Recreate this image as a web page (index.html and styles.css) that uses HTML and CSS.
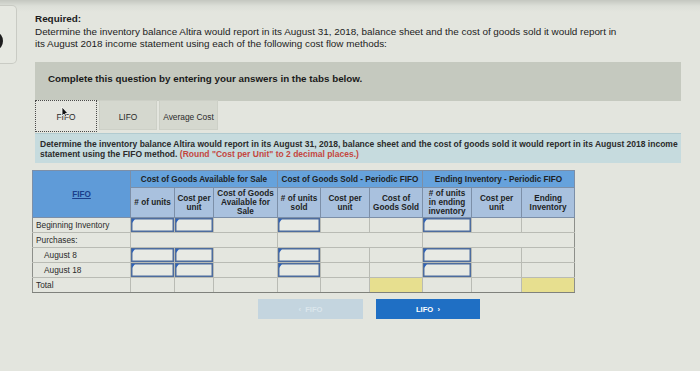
FILE: index.html
```html
<!DOCTYPE html>
<html lang="en">
<head>
    <meta charset="UTF-8">
    <title>Inventory - FIFO</title>
    <link rel="stylesheet" href="styles.css">
</head>
<body>
    <div class="page">
        <div class="side-card"><i class="ring"></i></div>
        <div class="main">
            <div class="required">
                <b>Required:</b>
                <p>Determine the inventory balance Altira would report in its August 31, 2018, balance sheet and the cost of goods sold it would report in<br>its August 2018 income statement using each of the following cost flow methods:</p>
            </div>
            <div class="notice">Complete this question by entering your answers in the tabs below.</div>

            <div class="tabs">
                <a class="tab active">FIFO</a>
                <a class="tab">LIFO</a>
                <a class="tab">Average Cost</a>
                <svg class="cursor" width="8" height="12" viewBox="0 0 8 12">
                    <path d="M1 1 L1 10 L3 8 L4.5 11 L5.8 10.4 L4.4 7.5 L7 7.5 Z" fill="#111" stroke="#fff" stroke-width="0.8"/>
                </svg>
            </div>

            <div class="info">
                <p>Determine the inventory balance Altira would report in its August 31, 2018, balance sheet and the cost of goods sold it would report in its August 2018 income</p>
                <p>statement using the FIFO method. <span class="hint">(Round "Cost per Unit" to 2 decimal places.)</span></p>
            </div>

            <table class="grid">
                <colgroup>
                    <col style="width:98px"><col style="width:44px"><col style="width:39px"><col style="width:64px">
                    <col style="width:43px"><col style="width:49px"><col style="width:53px">
                    <col style="width:49px"><col style="width:50px"><col style="width:53px">
                </colgroup>
                <thead>
                    <tr class="group">
                        <th rowspan="2" class="corner"><u>FIFO</u></th>
                        <th colspan="3">Cost of Goods Available for Sale</th>
                        <th colspan="3">Cost of Goods Sold - Periodic FIFO</th>
                        <th colspan="3">Ending Inventory - Periodic FIFO</th>
                    </tr>
                    <tr class="sub">
                        <th># of units</th>
                        <th>Cost per<br>unit</th>
                        <th>Cost of Goods<br>Available for<br>Sale</th>
                        <th># of units<br>sold</th>
                        <th>Cost per<br>unit</th>
                        <th>Cost of<br>Goods Sold</th>
                        <th># of units<br>in ending<br>inventory</th>
                        <th>Cost per<br>unit</th>
                        <th>Ending<br>Inventory</th>
                    </tr>
                </thead>
                <tbody>
                    <tr>
                        <td class="label">Beginning Inventory</td>
                        <td class="entry"></td><td class="entry"></td><td></td>
                        <td class="entry sep"></td><td></td><td></td>
                        <td class="entry sep"></td><td></td><td></td>
                    </tr>
                    <tr>
                        <td class="label">Purchases:</td>
                        <td colspan="3"></td>
                        <td colspan="3" class="sep"></td>
                        <td colspan="3" class="sep"></td>
                    </tr>
                    <tr>
                        <td class="label indent">August 8</td>
                        <td class="entry"></td><td class="entry"></td><td></td>
                        <td class="entry sep"></td><td></td><td></td>
                        <td class="entry sep"></td><td></td><td></td>
                    </tr>
                    <tr>
                        <td class="label indent">August 18</td>
                        <td class="entry"></td><td class="entry"></td><td></td>
                        <td class="entry sep"></td><td></td><td></td>
                        <td class="entry sep"></td><td></td><td></td>
                    </tr>
                    <tr class="total">
                        <td class="label">Total</td>
                        <td></td><td></td><td></td>
                        <td class="sep"></td><td></td><td class="sum"></td>
                        <td class="sep"></td><td></td><td class="sum"></td>
                    </tr>
                </tbody>
            </table>

            <div class="nav">
                <button class="nav-btn prev" disabled>&lsaquo;&nbsp;&nbsp;FIFO</button>
                <button class="nav-btn next">LIFO&nbsp;&nbsp;&rsaquo;</button>
            </div>
        </div>
    </div>
</body>
</html>
```

FILE: styles.css
```css
body,
p{
    margin: 0;
    padding: 0;
}
body{
    width: 700px;
    height: 371px;
    overflow: hidden;
    font-family: "Liberation Sans", Arial, sans-serif;
    color: #1c1c1c;
    background: linear-gradient(to bottom, #c4c7c0 0, #dcdfd8 6px, #e3e5de 12px);
}
.page{
    display: flex;
    align-items: flex-start;
}
.side-card{
    width: 16px;
    height: 57px;
    margin-top: 5px;
    border: 1px solid #c9cbc4;
    border-left: none;
    border-radius: 0 5px 5px 0;
    background-color: #e6e8e1;
    overflow: hidden;
    position: relative;
}
/* part of a big digit peeking out of the card */
.side-card .ring{
    position: absolute;
    left: -9px;
    top: 27px;
    width: 6px;
    height: 10px;
    border: 3px solid #1e1e1e;
    border-radius: 50%;
}
.main{
    margin-left: 18px;
    width: 646px;
}
.required{
    padding-top: 13px;
    font-size: 9.9px;
    line-height: 12px;
}
.required b{
    display: block;
    margin-bottom: 1px;
}
.notice{
    margin-top: 12px;
    height: 39px;
    padding-left: 13px;
    line-height: 34px;
    background-color: #c5c9bf;
    font-size: 9.8px;
    font-weight: bold;
    color: #1a1a1a;
}
.tabs{
    display: flex;
    gap: 2px;
    margin-top: -1px;
    position: relative;
}
.tab{
    display: block;
    height: 30px;
    line-height: 33px;
    text-align: center;
    font-size: 8.4px;
    color: #2a2a2a;
    background-color: #d5d8cf;
    border: 1px solid #cdd0c7;
    box-sizing: border-box;
}
.tab:nth-child(1){ width: 62px; }
.tab:nth-child(2){ width: 58px; }
.tab:nth-child(3){ width: 59px; }
.tab.active{
    height: 32px;
    background-color: #e5e6e0;
    border: 1px dotted #4a4a4a;
}
.cursor{
    position: absolute;
    left: 26px;
    top: 6px;
}
.info{
    margin-top: 1px;
    height: 30px;
    padding: 5px 0 0 5px;
    box-sizing: border-box;
    background-color: #c6dbde;
    border-top: 1px solid #b2cbd0;
    font-size: 8.5px;
    font-weight: bold;
    line-height: 10px;
    color: #2b2b2b;
    white-space: nowrap;
}
.info .hint{
    color: #c4463e;
}
.grid{
    margin-top: 7px;
    margin-left: -3px;
    border-collapse: collapse;
    table-layout: fixed;
    width: 542px;
    font-size: 8.2px;
}
.grid th{
    font-weight: bold;
    color: #1d1f24;
    border: 1px solid #7c8fa8;
    padding: 0;
    line-height: 9px;
    white-space: nowrap;
}
.grid .group th{
    height: 16px;
    background-color: #66a2dc;
}
.grid .sub th{
    height: 29px;
    background-color: #a9c1de;
}
.grid th.corner{
    background-color: #5f9bd8;
    color: #1b3f8c;
    vertical-align: middle;
}
.grid td{
    height: 14px;
    padding: 0;
    border: 1px solid #b9bbb4;
    background-color: #e4e6df;
    position: relative;
}
.grid td.label{
    padding-left: 3px;
    font-size: 8.3px;
    color: #2a2a2a;
    white-space: nowrap;
    border-left: 1px solid #8d8f8a;
}
.grid td.indent{
    padding-left: 11px;
}
.grid td.sep{
    border-left: 1px solid #8c8a80;
}
.grid td:last-child{
    border-right: 1px solid #8d8f8a;
}
.grid td.entry{
    background-color: #e8eae4;
    box-shadow: inset 0 0 0 1.5px #4d6c9e;
}
.grid td.entry::before{
    content: "";
    position: absolute;
    left: 1px;
    top: 1px;
    border-top: 4px solid #2e62b8;
    border-right: 3px solid transparent;
}
.grid .total td{
    border-bottom: 1px solid #7f817c;
}
.grid td.sum{
    background-color: #e7df8f;
}
.nav{
    display: flex;
    gap: 13px;
    margin-top: 6px;
    padding-left: 223px;
}
.nav-btn{
    height: 20px;
    border: none;
    font-family: "Liberation Sans", Arial, sans-serif;
    font-size: 7.6px;
    font-weight: bold;
    color: #fff;
}
.nav-btn.prev{
    width: 105px;
    background-color: #c4d5df;
    color: #dbe6ec;
}
.nav-btn.next{
    width: 104px;
    background-color: #1f6fc4;
}
```
